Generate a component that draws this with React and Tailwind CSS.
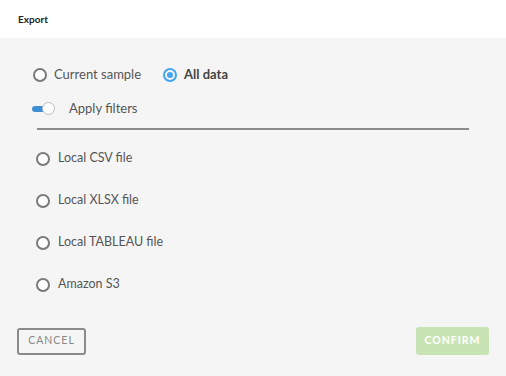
import React, { useState } from "react";

function Radio({ checked }) {
    return checked ? (
        <span className="w-[14px] h-[14px] rounded-full border-2 border-[#42a5f5] flex items-center justify-center shrink-0">
            <span className="w-[6px] h-[6px] rounded-full bg-[#42a5f5]" />
        </span>
    ) : (
        <span className="w-[14px] h-[14px] rounded-full border-2 border-[#7a7a7a] bg-white shrink-0" />
    );
}

export default function App() {
    const [scope, setScope] = useState("all");
    const [target, setTarget] = useState("");
    const targets = ["Local CSV file", "Local XLSX file", "Local TABLEAU file", "Amazon S3"];

    return (
        <div className="w-[506px] h-[376px] flex flex-col bg-[#f5f5f5] text-[#555] font-['Lato','Open_Sans',sans-serif]">
            <div className="h-[38px] bg-white flex items-center px-[18px] shrink-0">
                <span className="text-[10px] font-bold text-[#222]">Export</span>
            </div>

            <div className="flex flex-col pt-[29px] px-[33px]">
                <div className="flex items-center h-[16px]">
                    <button className="flex items-center gap-[7px]" onClick={() => setScope("sample")}>
                        <Radio checked={scope === "sample"} />
                        <span className="text-[13px]">Current sample</span>
                    </button>
                    <button className="flex items-center gap-[7px] ml-[22px]" onClick={() => setScope("all")}>
                        <Radio checked={scope === "all"} />
                        <span className="text-[13px] font-bold text-[#444]">All data</span>
                    </button>
                </div>

                <div className="flex items-center mt-[18px] h-[16px]">
                    <span className="relative w-[22px] h-[14px] flex items-center">
                        <span className="w-[16px] h-[6px] rounded-full bg-[#3d8fd6] ml-[-1px]" />
                        <span className="absolute left-[9px] top-0 w-[13px] h-[13px] rounded-full bg-white border border-[#bdbdbd]" />
                    </span>
                    <span className="text-[13px] ml-[14px]">Apply filters</span>
                </div>

                <div className="h-[1.5px] bg-[#8a8a8a] ml-[4px] w-[432px] mt-[11px]" />

                <div className="flex flex-col gap-[26px] mt-[21px] ml-[3px]">
                    {targets.map((t) => (
                        <button key={t} className="flex items-center gap-[8px] h-[16px]" onClick={() => setTarget(t)}>
                            <Radio checked={target === t} />
                            <span className="text-[12.5px]">{t}</span>
                        </button>
                    ))}
                </div>
            </div>

            <div className="mt-auto flex justify-between items-center px-[17px] pb-[21px]">
                <button className="w-[69px] h-[27px] border-2 border-[#8a8a8a] rounded-[3px] text-[10.5px] tracking-[1px] text-[#888]">
                    CANCEL
                </button>
                <button disabled className="w-[73px] h-[28px] rounded-[3px] bg-[#c9e4b4] text-white text-[10.5px] font-bold tracking-[1px]">
                    CONFIRM
                </button>
            </div>
        </div>
    );
}
